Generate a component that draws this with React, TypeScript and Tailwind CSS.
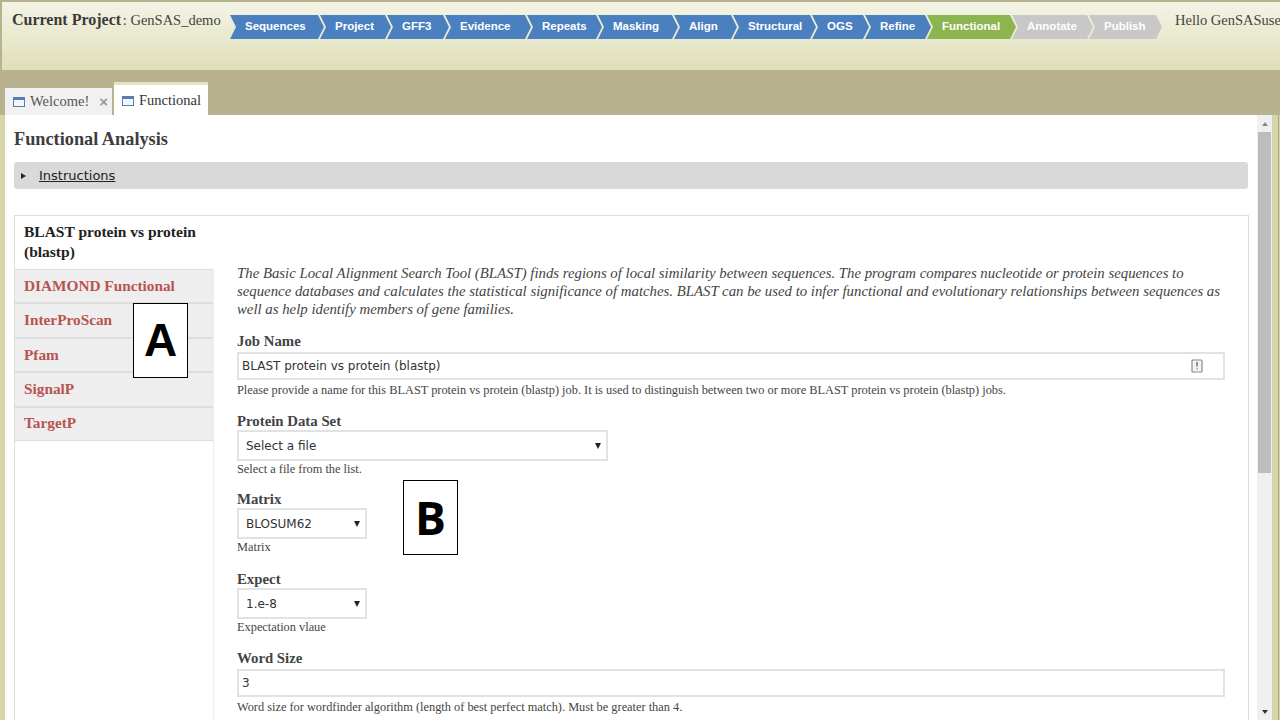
const steps = [
  { label: "Sequences", color: "bg-[#4a80bf]", width: "w-[96px]" },
  { label: "Project", color: "bg-[#4a80bf]", width: "w-[73px]" },
  { label: "GFF3", color: "bg-[#4a80bf]", width: "w-[64px]" },
  { label: "Evidence", color: "bg-[#4a80bf]", width: "w-[88px]" },
  { label: "Repeats", color: "bg-[#4a80bf]", width: "w-[77px]" },
  { label: "Masking", color: "bg-[#4a80bf]", width: "w-[82px]" },
  { label: "Align", color: "bg-[#4a80bf]", width: "w-[65px]" },
  { label: "Structural", color: "bg-[#4a80bf]", width: "w-[85px]" },
  { label: "OGS", color: "bg-[#4a80bf]", width: "w-[59px]" },
  { label: "Refine", color: "bg-[#4a80bf]", width: "w-[68px]" },
  { label: "Functional", color: "bg-[#8db54f]", width: "w-[91px]" },
  { label: "Annotate", color: "bg-[#c8c8c8]", width: "w-[83px]" },
  { label: "Publish", color: "bg-[#c8c8c8]", width: "w-[75px]" },
];

const tools = ["DIAMOND Functional", "InterProScan", "Pfam", "SignalP", "TargetP"];

function TabIcon() {
  return (
    <svg width="12" height="10" viewBox="0 0 12 10" className="shrink-0">
      <rect x="0.5" y="0.5" width="11" height="9" fill="#f2f6fb" stroke="#5b7ea8" />
      <rect x="1" y="1" width="10" height="2" fill="#4f7fc0" />
    </svg>
  );
}

function Caret() {
  return <span className="ml-auto w-0 h-0 border-x-[3.5px] border-x-transparent border-t-[6px] border-t-[#222] mr-[5px]" />;
}

function FakeSelect({ value, width }: { value: string; width: string }) {
  return (
    <div className={`flex items-center h-[31px] pl-[7px] border-2 border-[#e2e2e2] font-['DejaVu_Sans',sans-serif] text-[12px] text-[#333] ${width}`}>
      {value}
      <Caret />
    </div>
  );
}

export default function App() {
  return (
    <div className="h-[720px] w-[1280px] overflow-hidden flex flex-col bg-[#b8b291] pt-[2px] font-['Liberation_Serif',serif] text-[#444]">
      {/* top project bar */}
      <header className="ml-[2px] h-[68px] shrink-0 flex items-start bg-gradient-to-b from-[#f4f4e6] to-[#dfdfb9]">
        <div className="w-[226px] shrink-0 pl-[10px] pt-[9px] text-[14.5px] leading-[18px] whitespace-nowrap">
          <b className="text-[#3a3a3a] text-[16px]">Current Project</b>
          <span className="-ml-[2px]"> : GenSAS_demo</span>
        </div>
        <nav className="flex shrink-0 mt-[13px]">
          {steps.map((s) => (
            <div
              key={s.label}
              className={`h-[24px] flex items-center pl-[17px] -mr-[6px] text-white font-['Liberation_Sans',sans-serif] font-bold text-[11.5px] [clip-path:polygon(2px_0,calc(100%-6px)_0,100%_50%,calc(100%-6px)_100%,2px_100%,8px_50%)] ${s.color} ${s.width}`}
            >
              {s.label}
            </div>
          ))}
        </nav>
        <div className="flex-1 min-w-0 overflow-hidden pl-[19px] pt-[9px] text-[14.5px] leading-[18px] whitespace-nowrap">Hello GenSASuser</div>
      </header>

      {/* tabs */}
      <div className="h-[45px] shrink-0 flex items-end pl-[5px] gap-[2px]">
        <div className="h-[27px] w-[107px] flex items-center gap-[5px] pl-[8px] pt-[1px] bg-[#f1f1f1] text-[14.5px] text-[#555]">
          <TabIcon />
          Welcome!
          <span className="ml-auto mr-[4px] text-[#999] text-[15px] font-['Liberation_Sans',sans-serif] font-bold">×</span>
        </div>
        <div className="h-[33px] w-[94px] flex items-center gap-[5px] pl-[8px] pt-[1px] bg-white border-t-[3px] border-[#e3e3c4] text-[14.5px] text-[#333]">
          <TabIcon />
          Functional
        </div>
      </div>

      {/* page body */}
      <div className="flex-1 min-h-0 flex pl-[5px] bg-[#d6d6aa]">
        <main className="w-[1252px] bg-white pl-[9px] pr-[9px] overflow-hidden">
          <h1 className="mt-[14px] text-[18.3px] leading-[20px] font-bold text-[#3d3d3d]">Functional Analysis</h1>
          <div className="mt-[13px] h-[27px] flex items-center rounded-[3px] bg-[#d9d9d9] pl-[7px] font-['DejaVu_Sans',sans-serif] text-[13px] text-[#222]">
            <span className="w-0 h-0 border-y-[3.5px] border-y-transparent border-l-[5px] border-l-[#222]" />
            <span className="ml-[13px] underline">Instructions</span>
          </div>

          <section className="relative mt-[26px] flex border border-[#dcdcdc] w-[1235px] h-[600px]">
            <aside className="w-[199px] shrink-0 border-r border-[#eeeeee]">
              <div className="h-[53px] -mr-[1px] bg-white pl-[9px] pt-[6px] text-[15.5px] leading-[20px] font-bold text-[#222]">
                BLAST protein vs protein (blastp)
              </div>
              {tools.map((t) => (
                <div key={t} className="h-[34.4px] flex items-center pl-[9px] bg-[#eeeeee] border-y border-[#dddddd] text-[15.3px] font-bold text-[#b85450]">
                  {t}
                </div>
              ))}
            </aside>

            <div className="flex-1 pl-[23px] pr-[23px] pt-[48px]">
              <p className="italic text-[14.8px] leading-[18px] text-[#444]">
                The Basic Local Alignment Search Tool (BLAST) finds regions of local similarity between sequences. The program compares nucleotide or protein sequences to sequence databases and calculates the statistical significance of matches. BLAST can be used to infer functional and evolutionary relationships between sequences as well as help identify members of gene families.
              </p>

              <label className="block mt-[14px] text-[14.8px] leading-[18px] font-bold">Job Name</label>
              <div className="mt-[2px] h-[28px] flex items-center pl-[3px] border-2 border-[#e2e2e2] font-['DejaVu_Sans',sans-serif] text-[12px] text-[#333]">
                BLAST protein vs protein (blastp)
                <svg width="12" height="14" viewBox="0 0 12 14" className="ml-auto mr-[20px]">
                  <rect x="1" y="1" width="10" height="12" rx="1" fill="#f4f4f4" stroke="#888" strokeWidth="1.2" />
                  <rect x="5.2" y="3" width="1.6" height="4.5" fill="#777" />
                  <rect x="5.2" y="8.8" width="1.6" height="1.8" fill="#aaa" />
                </svg>
              </div>
              <p className="mt-[2px] text-[12.35px] leading-[16px]">Please provide a name for this BLAST protein vs protein (blastp) job. It is used to distinguish between two or more BLAST protein vs protein (blastp) jobs.</p>

              <label className="block mt-[14px] text-[14.8px] leading-[18px] font-bold">Protein Data Set</label>
              <FakeSelect value="Select a file" width="w-[371px]" />
              <p className="text-[12.35px] leading-[16px]">Select a file from the list.</p>

              <label className="block mt-[13px] text-[14.8px] leading-[18px] font-bold">Matrix</label>
              <FakeSelect value="BLOSUM62" width="w-[130px]" />
              <p className="text-[12.35px] leading-[16px]">Matrix</p>

              <label className="block mt-[15px] text-[14.8px] leading-[18px] font-bold">Expect</label>
              <FakeSelect value="1.e-8" width="w-[130px]" />
              <p className="text-[12.35px] leading-[16px]">Expectation vlaue</p>

              <label className="block mt-[14px] text-[14.8px] leading-[18px] font-bold">Word Size</label>
              <div className="mt-[2px] h-[28px] flex items-center pl-[3px] border-2 border-[#e2e2e2] font-['DejaVu_Sans',sans-serif] text-[12px] text-[#333]">3</div>
              <p className="mt-[2px] text-[12.35px] leading-[16px]">Word size for wordfinder algorithm (length of best perfect match). Must be greater than 4.</p>
            </div>

            {/* annotation labels laid over the screenshot */}
            <div className="absolute left-[118px] top-[87px] w-[55px] h-[75px] flex items-center justify-center bg-white border border-black font-['Liberation_Sans',sans-serif] font-bold text-[46px] text-black">A</div>
            <div className="absolute left-[388px] top-[264px] w-[55px] h-[75px] flex items-center justify-center bg-white border border-black font-['Open_Sans',sans-serif] font-bold text-[46px] text-black">B</div>
          </section>
        </main>

        {/* scrollbar */}
        <div className="w-[15px] bg-[#f0f0f0] flex flex-col items-center relative">
          <span className="mt-[7px] w-0 h-0 border-x-[3.5px] border-x-transparent border-b-[4px] border-b-[#888]" />
          <div className="absolute top-[17px] left-[1px] right-[1px] h-[341px] bg-[#bdbdbd]" />
          <span className="mt-auto mb-[6px] w-0 h-0 border-x-[3.5px] border-x-transparent border-t-[4px] border-t-[#333]" />
        </div>
        <div className="ml-[6px] w-[1px] bg-[#a8a589]" />
      </div>
    </div>
  );
}
